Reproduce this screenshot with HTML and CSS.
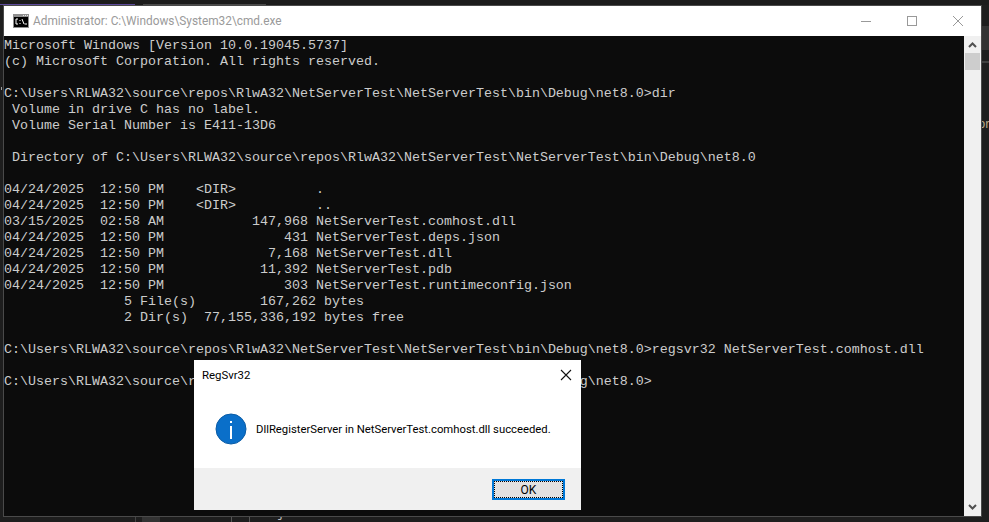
FILE: index.html
```html
<!DOCTYPE html>
<html lang="en">
<head>
<meta charset="utf-8">
<title>Administrator: C:\Windows\System32\cmd.exe</title>
<link rel="stylesheet" href="styles.css">
</head>
<body>
<div class="desktop">
  <div class="ide-top"><span class="ide-tab-a"></span><span class="ide-tab-b"></span></div>
  <div class="ide-side"><span class="ide-band"></span><span class="ide-line"></span><span class="ide-letters">or</span></div>
  <div class="ide-bottom"><span class="ide-rule"></span><span class="ide-cell"></span><span class="ide-num">28</span><span class="ide-tick"></span><span class="ide-tick2"></span><span class="ide-brace">}</span></div>

  <section class="cmd">
    <header class="cmd-title">
      <svg class="cmd-icon" width="16" height="14" viewBox="0 0 16 14">
        <rect x="0" y="0" width="16" height="14" fill="#8f8f8f"/>
        <rect x="1" y="3" width="14" height="10" fill="#000"/>
        <rect x="10" y="1" width="1" height="1" fill="#e6e6e6"/><rect x="12" y="1" width="1" height="1" fill="#e6e6e6"/><rect x="14" y="1" width="1" height="1" fill="#e6e6e6"/>
        <path d="M5 5H3V10H5M7 6V7M7 9V10M9 5L11 10M11.5 10H14" stroke="#fff" stroke-width="1" fill="none"/>
      </svg>
      <span class="cmd-name">Administrator: C:\Windows\System32\cmd.exe</span>
      <span class="cap">
        <svg width="10" height="10" viewBox="0 0 10 10"><path d="M0 5.5H10" stroke="#999" fill="none"/></svg>
      </span>
      <span class="cap">
        <svg width="10" height="10" viewBox="0 0 10 10"><rect x=".5" y=".5" width="9" height="9" stroke="#999" fill="none"/></svg>
      </span>
      <span class="cap">
        <svg width="10" height="10" viewBox="0 0 10 10"><path d="M0 0L10 10M10 0L0 10" stroke="#999" fill="none"/></svg>
      </span>
    </header>
    <div class="cmd-body">
<pre class="console">Microsoft Windows [Version 10.0.19045.5737]
(c) Microsoft Corporation. All rights reserved.

C:\Users\RLWA32\source\repos\RlwA32\NetServerTest\NetServerTest\bin\Debug\net8.0&gt;dir
 Volume in drive C has no label.
 Volume Serial Number is E411-13D6

 Directory of C:\Users\RLWA32\source\repos\RlwA32\NetServerTest\NetServerTest\bin\Debug\net8.0

04/24/2025  12:50 PM    &lt;DIR&gt;          .
04/24/2025  12:50 PM    &lt;DIR&gt;          ..
03/15/2025  02:58 AM           147,968 NetServerTest.comhost.dll
04/24/2025  12:50 PM               431 NetServerTest.deps.json
04/24/2025  12:50 PM             7,168 NetServerTest.dll
04/24/2025  12:50 PM            11,392 NetServerTest.pdb
04/24/2025  12:50 PM               303 NetServerTest.runtimeconfig.json
               5 File(s)        167,262 bytes
               2 Dir(s)  77,155,336,192 bytes free

C:\Users\RLWA32\source\repos\RlwA32\NetServerTest\NetServerTest\bin\Debug\net8.0&gt;regsvr32 NetServerTest.comhost.dll

C:\Users\RLWA32\source\repos\RlwA32\NetServerTest\NetServerTest\bin\Debug\net8.0&gt;</pre>
      <span class="stray"></span>
      <div class="scrollbar">
        <svg class="arrow" width="9" height="6" viewBox="0 0 9 6"><path d="M1 5L4.5 1.5L8 5" stroke="#505050" stroke-width="2" fill="none"/></svg>
        <span class="thumb"></span>
        <span class="track"></span>
        <svg class="arrow" width="9" height="6" viewBox="0 0 9 6"><path d="M1 1L4.5 4.5L8 1" stroke="#505050" stroke-width="2" fill="none"/></svg>
      </div>
    </div>
  </section>

  <section class="dialog">
    <header class="dlg-title">
      <span class="dlg-caption">RegSvr32</span>
      <svg width="12" height="12" viewBox="0 0 12 12"><path d="M1 1L11 11M11 1L1 11" stroke="#111" stroke-width="1.1" fill="none"/></svg>
    </header>
    <div class="dlg-main">
      <svg class="info" width="32" height="32" viewBox="0 0 32 32">
        <circle cx="16" cy="16" r="15" fill="#0a6fc9" stroke="#0a5ca6" stroke-width="1"/>
        <rect x="15" y="13" width="2" height="13" fill="#fff"/>
        <rect x="15" y="8" width="2" height="2" fill="#fff"/>
      </svg>
      <p class="dlg-text">DllRegisterServer in NetServerTest.comhost.dll succeeded.</p>
    </div>
    <footer class="dlg-foot"><button class="ok" type="button"><span class="ok-label">OK</span></button></footer>
  </section>
</div>
</body>
</html>
```
FILE: styles.css
```css
* { box-sizing: border-box; }
html, body { margin: 0; padding: 0; }
body { width: 989px; height: 522px; overflow: hidden; background: #1e1e1e; }
.desktop { position: relative; width: 989px; height: 522px; overflow: hidden; background: #1e1e1e; }

.ide-top { position: absolute; left: 0; top: 0; width: 989px; height: 5px; background: #1c1c1c; }
.ide-tab-a { position: absolute; left: 0; top: 4px; width: 135px; height: 1px; background: #5d4a9c; }
.ide-tab-b { position: absolute; left: 143px; top: 4px; width: 123px; height: 1px; background: #4a4a4a; }
.ide-side { position: absolute; left: 982px; top: 0; width: 7px; height: 522px; }
.ide-band { position: absolute; left: 0; top: 26px; width: 7px; height: 24px; background: #333; }
.ide-line { position: absolute; left: 0; top: 61px; width: 7px; height: 2px; background: #404040; }
.ide-letters { position: absolute; left: -4px; top: 116px; font: 13px/16px "Liberation Sans", sans-serif; color: #b9a98a; }
.ide-bottom { position: absolute; left: 0; top: 517px; width: 989px; height: 5px; overflow: hidden; background: #1e1e1e; }
.ide-rule { position: absolute; left: 135px; top: 0; width: 1px; height: 5px; background: #444; }
.ide-cell { position: absolute; left: 142px; top: 0; width: 18px; height: 5px; background: #333; }
.ide-num { position: absolute; left: 184px; top: -11px; font: 13px/16px "Liberation Mono", monospace; color: #5f87a8; }
.ide-tick { position: absolute; left: 231px; top: 0; width: 1px; height: 5px; background: #555; }
.ide-tick2 { position: absolute; left: 249px; top: 0; width: 1px; height: 5px; background: #555; }
.ide-brace { position: absolute; left: 277px; top: -11px; font: 13px/16px "Liberation Mono", monospace; color: #bbb; }

.cmd { position: absolute; left: 3px; top: 5px; width: 979px; height: 512px; border: 1px solid #4a4a4a; display: flex; flex-direction: column; background: #fff; }
.cmd-title { height: 30px; flex: none; display: flex; align-items: center; background: #fff; padding-left: 9px; }
.cmd-icon { flex: none; margin-right: 4px; }
.cmd-name { flex: 1; font: 11.85px/16px Roboto, sans-serif; color: #9a9a9a; white-space: nowrap; }
.cap { flex: none; width: 46px; height: 30px; display: flex; align-items: center; justify-content: center; }
.cmd-body { position: relative; flex: 1; display: flex; min-height: 0; }
.console { flex: 1; margin: 0; padding: 2px 0 0; overflow: hidden; background: #0c0c0c; color: #cccccc; font: 13.33px/16px "Liberation Mono", monospace; white-space: pre; }
.stray { position: absolute; left: -3px; top: 51px; width: 1px; height: 3px; background: #a0a0a0; }
.scrollbar { flex: none; width: 17px; background: #f0f0f0; display: flex; flex-direction: column; align-items: center; padding: 6px 0 6px; }
.arrow { flex: none; }
.thumb { flex: none; width: 15px; height: 17px; margin-top: 5px; background: #cdcdcd; }
.track { flex: 1; }

.dialog { position: absolute; left: 194px; top: 360px; width: 387px; height: 150px; display: flex; flex-direction: column; background: #fff; }
.dlg-title { height: 30px; flex: none; display: flex; align-items: center; justify-content: space-between; padding: 0 9px 0 8px; color: #000; }
.dlg-caption { font: 11.4px/16px Roboto, sans-serif; }
.dlg-main { flex: 1; display: flex; align-items: center; padding-left: 21px; }
.info { flex: none; margin-right: 9px; }
.dlg-text { margin: 2px 0 0; font: 11.3px/16px Roboto, sans-serif; color: #000; white-space: nowrap; }
.dlg-foot { flex: none; height: 42px; background: #f0f0f0; display: flex; justify-content: flex-end; align-items: flex-start; padding: 11px 16px 0 0; }
.ok { width: 73px; height: 21px; padding: 0; background: #e1e1e1; border: 2px solid #0078d7; outline: 1px dotted #000; outline-offset: -3px; font: 12px/16px Roboto, sans-serif; color: #000; }
```
